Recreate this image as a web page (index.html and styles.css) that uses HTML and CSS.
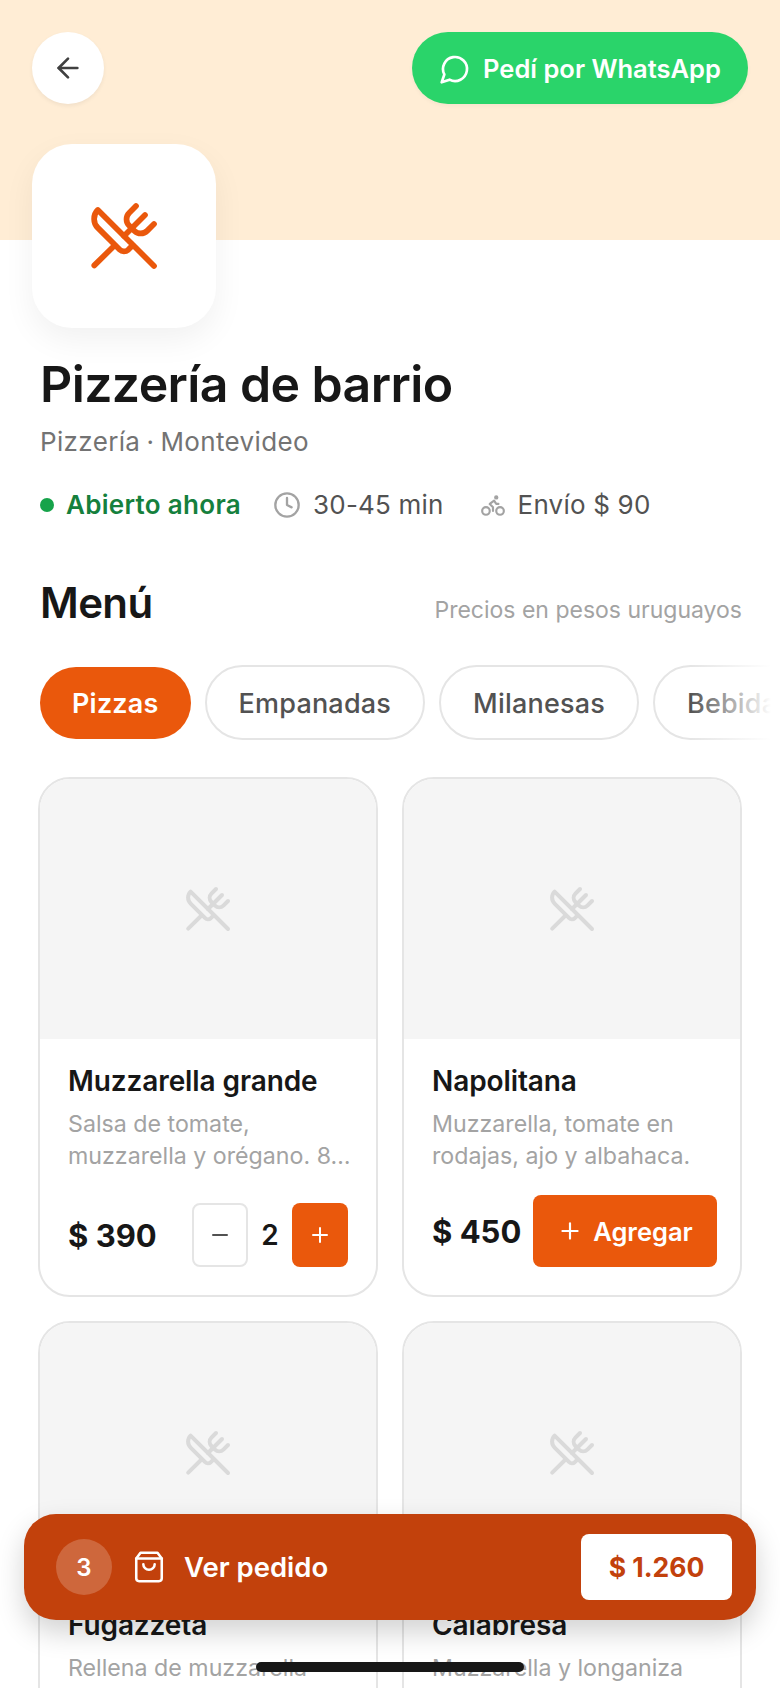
FILE: index.html
```html
<!DOCTYPE html>
<html lang="es">
<head>
<meta charset="utf-8">
<title>Pizzería de barrio</title>
<link rel="stylesheet" href="styles.css">
</head>
<body>
<svg class="defs" width="0" height="0" aria-hidden="true">
  <symbol id="utensils" viewBox="0 0 24 24">
    <path d="m16 2-2.3 2.3a3 3 0 0 0 0 4.2l1.8 1.8a3 3 0 0 0 4.2 0L22 8"/>
    <path d="M15 15 3.3 3.3a4.2 4.2 0 0 0 0 6l7.3 7.3c.7.7 2 .7 2.8 0L15 15Zm0 0 7 7"/>
    <path d="m2.1 21.8 6.4-6.3"/>
    <path d="m19 5-7 7"/>
  </symbol>
  <symbol id="plus" viewBox="0 0 24 24"><path d="M5 12h14"/><path d="M12 5v14"/></symbol>
</svg>
<div class="page">
  <header class="hero">
    <div class="hero-top">
      <button class="back"><svg class="ic ic-back" viewBox="0 0 24 24"><path d="m12 19-7-7 7-7"/><path d="M19 12H5"/></svg></button>
      <button class="wa"><svg class="ic ic-wa" viewBox="0 0 24 24"><path d="M7.9 20A9 9 0 1 0 4 16.1L2 22Z"/></svg>Pedí por WhatsApp</button>
    </div>
    <div class="logo"><svg class="ic ic-logo"><use href="#utensils"/></svg></div>
  </header>

  <section class="info">
    <h1 class="title">Pizzería de barrio</h1>
    <p class="sub">Pizzería · Montevideo</p>
    <div class="meta">
      <span class="open"><i class="dot"></i>Abierto ahora</span>
      <span class="meta-item"><svg class="ic ic-clock" viewBox="0 0 24 24"><circle cx="12" cy="12" r="10"/><path d="M12 6v6l4 2"/></svg>30-45 min</span>
      <span class="meta-item"><svg class="ic ic-bike" viewBox="0 0 24 24"><circle cx="18.5" cy="17.5" r="3.5"/><circle cx="5.5" cy="17.5" r="3.5"/><circle cx="15" cy="5" r="1"/><path d="M12 17.5V14l-3-3 4-3 2 3h2"/></svg>Envío $ 90</span>
    </div>
  </section>

  <section class="menu-head">
    <h2 class="menu-title">Menú</h2>
    <span class="menu-note">Precios en pesos uruguayos</span>
  </section>

  <nav class="chips">
    <span class="chip chip-on">Pizzas</span>
    <span class="chip">Empanadas</span>
    <span class="chip">Milanesas</span>
    <span class="chip">Bebidas</span>
    <span class="chips-fade"></span>
  </nav>

  <main class="grid">
    <article class="card">
      <div class="thumb"><svg class="ic ic-thumb"><use href="#utensils"/></svg></div>
      <div class="body">
        <h3 class="name">Muzzarella grande</h3>
        <p class="desc">Salsa de tomate,<br>muzzarella y orégano. 8…</p>
        <div class="foot foot-qty">
          <span class="price">$ 390</span>
          <div class="qty">
            <button class="qbtn qminus"><svg class="ic ic-q" viewBox="0 0 24 24"><path d="M5 12h14"/></svg></button>
            <span class="qnum">2</span>
            <button class="qbtn qplus"><svg class="ic ic-q"><use href="#plus"/></svg></button>
          </div>
        </div>
      </div>
    </article>
    <article class="card">
      <div class="thumb"><svg class="ic ic-thumb"><use href="#utensils"/></svg></div>
      <div class="body">
        <h3 class="name">Napolitana</h3>
        <p class="desc">Muzzarella, tomate en<br>rodajas, ajo y albahaca.</p>
        <div class="foot">
          <span class="price">$ 450</span>
          <button class="add"><svg class="ic ic-add"><use href="#plus"/></svg>Agregar</button>
        </div>
      </div>
    </article>
    <article class="card">
      <div class="thumb"><svg class="ic ic-thumb"><use href="#utensils"/></svg></div>
      <div class="body">
        <h3 class="name">Fugazzeta</h3>
        <p class="desc">Rellena de muzzarella</p>
      </div>
    </article>
    <article class="card">
      <div class="thumb"><svg class="ic ic-thumb"><use href="#utensils"/></svg></div>
      <div class="body">
        <h3 class="name">Calabresa</h3>
        <p class="desc">Muzzarella y longaniza</p>
      </div>
    </article>
  </main>

  <div class="cart">
    <span class="badge">3</span>
    <svg class="ic ic-bag" viewBox="0 0 24 24"><path d="M6 2 3 6v14a2 2 0 0 0 2 2h14a2 2 0 0 0 2-2V6l-3-4Z"/><path d="M3 6h18"/><path d="M16 10a4 4 0 0 1-8 0"/></svg>
    <span class="cart-label">Ver pedido</span>
    <span class="cart-total">$ 1.260</span>
  </div>
  <div class="home"></div>
</div>
</body>
</html>
```

FILE: styles.css
```css
* { box-sizing: border-box; }
html, body { margin: 0; padding: 0; height: 1688px; overflow: hidden; background: #fff; }
body { font-family: Inter, "Liberation Sans", sans-serif; color: #171717; }
button { font: inherit; border: 0; padding: 0; cursor: pointer; }
h1, h2, h3, p { margin: 0; }
.defs { position: absolute; }
.page { position: relative; width: 780px; height: 1688px; overflow: hidden; }
.ic { display: block; fill: none; stroke: currentColor; stroke-width: 2; stroke-linecap: round; stroke-linejoin: round; flex: none; }

.hero { height: 240px; background: #ffedd5; padding: 32px 32px 0; }
.hero-top { display: flex; justify-content: space-between; }
.back { width: 72px; height: 72px; border-radius: 50%; background: #fff; color: #404040; display: flex; align-items: center; justify-content: center; box-shadow: 0 2px 4px rgba(0,0,0,.06); }
.ic-back { width: 32px; height: 32px; }
.wa { width: 336px; height: 72px; border-radius: 36px; background: #2ad46a; color: #fff; display: flex; align-items: center; justify-content: center; gap: 12px; font-size: 25.5px; font-weight: 600; padding-top: 1px; box-shadow: 0 2px 4px rgba(0,0,0,.04); }
.ic-wa { width: 32px; height: 32px; }
.logo { position: relative; width: 184px; height: 184px; margin-top: 40px; border-radius: 40px; background: #fff; color: #ea580c; display: flex; align-items: center; justify-content: center; box-shadow: 0 12px 32px rgba(0,0,0,.06); }
.ic-logo { width: 72px; height: 72px; stroke-width: 1.9; }

.info { padding: 116px 40px 0; }
.title { font-size: 50px; line-height: 56px; font-weight: 600; letter-spacing: -.6px; color: #171717; }
.sub { margin-top: 12px; font-size: 26px; line-height: 36px; letter-spacing: .35px; word-spacing: -1.5px; color: #737373; }
.meta { display: flex; align-items: center; margin-top: 27px; font-size: 26px; line-height: 36px; letter-spacing: .2px; color: #525252; }
.open { display: flex; align-items: center; gap: 12px; color: #15803d; font-weight: 600; letter-spacing: .3px; margin-right: 32px; }
.dot { width: 14px; height: 14px; border-radius: 50%; background: #16a34a; }
.meta-item { display: flex; align-items: center; gap: 12px; margin-right: 36px; }
.ic-clock { width: 28px; height: 28px; color: #a3a3a3; }
.ic-bike { width: 26px; height: 26px; color: #a3a3a3; }

.menu-head { display: flex; justify-content: space-between; align-items: baseline; padding: 54px 38px 0 40px; }
.menu-title { font-size: 42px; line-height: 52px; font-weight: 600; letter-spacing: -.6px; }
.menu-note { font-size: 23px; color: #a3a3a3; }

.chips { position: relative; display: flex; gap: 14px; padding: 36px 0 0 40px; align-items: center; }
.chip { flex: none; height: 75px; padding: 1px 32px 0; border: 2px solid #e5e5e5; border-radius: 38px; display: flex; align-items: center; font-size: 27px; letter-spacing: .2px; font-weight: 500; color: #525252; background: #fff; }
.chip-on { height: 72px; border: 0; padding: 1px 32px 0; background: #ea580c; color: #fff; font-weight: 600; }
.chips-fade { position: absolute; right: 0; top: 36px; bottom: 0; width: 90px; background: linear-gradient(90deg, rgba(255,255,255,0), #fff 90%); }

.grid { display: grid; grid-template-columns: 340px 340px; gap: 24px; padding: 37px 38px 0; }
.card { height: 520px; border: 2px solid #e5e5e5; border-radius: 32px; overflow: hidden; background: #fff; }
.thumb { height: 260px; background: #f5f5f5; color: #dadada; display: flex; align-items: center; justify-content: center; }
.ic-thumb { width: 48px; height: 48px; }
.body { padding: 24px 23px 0 28px; }
.name { font-size: 28px; line-height: 36px; font-weight: 600; letter-spacing: -.1px; color: #171717; }
.desc { margin-top: 9px; font-size: 23.2px; line-height: 32px; color: #a3a3a3; white-space: nowrap; }
.foot { display: flex; align-items: center; justify-content: space-between; margin-top: 23px; }
.foot-qty { margin-top: 31px; }
.price { font-size: 31px; font-weight: 700; color: #171717; }
.qty { display: flex; align-items: center; gap: 0; margin-right: 5px; }
.qbtn { width: 56px; height: 64px; border-radius: 8px; display: flex; align-items: center; justify-content: center; }
.qminus { background: #fff; border: 2px solid #e5e5e5; color: #525252; }
.qplus { background: #ea580c; color: #fff; }
.ic-q { width: 24px; height: 24px; }
.qnum { width: 44px; text-align: center; font-size: 28px; font-weight: 600; }
.add { height: 72px; width: 184px; border-radius: 8px; background: #ea580c; color: #fff; display: flex; align-items: center; justify-content: center; gap: 10px; font-size: 25.5px; font-weight: 600; }
.ic-add { width: 26px; height: 26px; }

.cart { position: absolute; left: 24px; top: 1514px; width: 732px; height: 106px; border-radius: 32px; background: #c2410c; color: #fff; display: flex; align-items: center; padding: 0 24px 0 32px; box-shadow: 0 12px 28px rgba(0,0,0,.18); }
.badge { width: 56px; height: 56px; border-radius: 50%; background: rgba(255,255,255,.2); display: flex; align-items: center; justify-content: center; font-size: 24px; font-weight: 600; }
.ic-bag { width: 34px; height: 34px; margin-left: 20px; stroke-width: 1.8; }
.cart-label { margin-left: 18px; font-size: 27.5px; font-weight: 600; }
.cart-total { margin-left: auto; width: 151px; height: 66px; border-radius: 8px; background: #fff; color: #c2410c; display: flex; align-items: center; justify-content: center; font-size: 26.5px; font-weight: 700; }
.home { position: absolute; left: 256px; top: 1662px; width: 268px; height: 10px; border-radius: 5px; background: #171717; }
```
